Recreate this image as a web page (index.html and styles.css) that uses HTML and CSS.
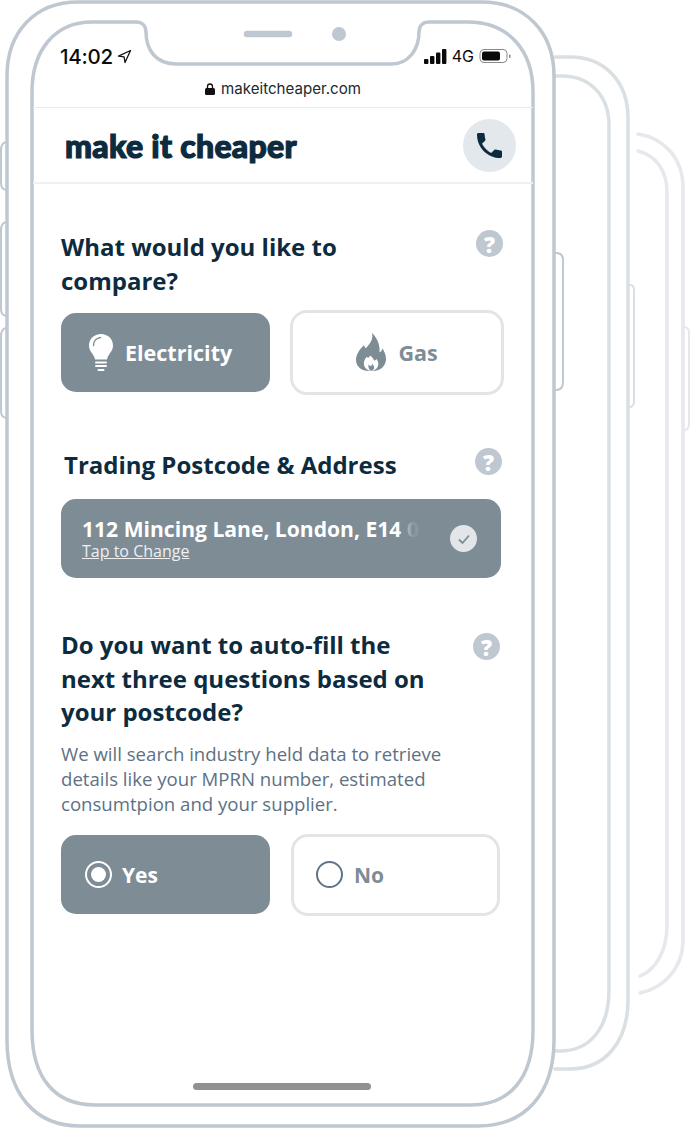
FILE: index.html
```html
<!DOCTYPE html>
<html lang="en">
<head>
<meta charset="utf-8">
<title>Make It Cheaper</title>
<link rel="stylesheet" href="styles.css">
</head>
<body>
<div class="device">
  <svg class="frame" width="690" height="1128" viewBox="0 0 690 1128" fill="none">
    <g class="back3">
      <path d="M638 134C664 138 683 158 683 188V940C683 968 664 988 640 993"/>
      <path d="M638 151C655 155 667 170 667 192V925C667 952 655 970 640 976"/>
      <path class="thin" d="M684 327C687 327 689 329 689 333V424C689 428 687 430 684 430"/>
    </g>
    <g class="back2">
      <path d="M555 57H570C605 57 628 82 628 118V1000C628 1042 605 1069 570 1069H555"/>
      <path d="M555 76H562C590 76 609 96 609 125V990C609 1028 590 1051 560 1051H555"/>
      <path class="thin" d="M630 285C633 285 634 287 634 290V401C634 405 632 407 630 407"/>
    </g>
    <g class="main">
      <path d="M78 2H482C525 2 554 32 554 76V1040C554 1094 525 1126 478 1126H80C35 1126 7 1094 7 1040V76C7 32 35 2 78 2Z"/>
      <path d="M32 92C32 50 55 22 92 22H136C142 22 146 26 146 32C146 50 156 64 176 64H392C408 64 419 50 419 32C419 26 423 22 429 22H468C508 22 533 50 533 92V1030C533 1078 510 1105 470 1105H95C55 1105 32 1078 32 1030Z"/>
      <path class="thin" d="M6 142C2 143 1 146 1 150V182C1 187 2 189 6 190"/>
      <path class="thin" d="M6 222C2 223 1 226 1 230V308C1 313 2 315 6 316"/>
      <path class="thin" d="M6 328C2 329 1 332 1 336V410C1 415 2 417 6 418"/>
      <path class="thin" d="M556 253C561 253 563 256 563 260V382C563 387 561 390 556 390"/>
      <path class="speaker" d="M247 34H289"/>
    </g>
    <circle class="camera" cx="339" cy="34" r="7"/>
  </svg>

  <div class="screen">
    <div class="status">
      <div class="status-left">
        <span class="time">14:02</span>
        <svg class="locate" width="15" height="15" viewBox="0 0 15 15"><path d="M13.500 1.500 1.500 7.200l5.600.6.9 5.700z"/></svg>
      </div>
      <div class="status-right">
        <svg width="23" height="15" viewBox="0 0 23 15"><rect x="0" y="10" width="4.400" height="5" rx="1"/><rect x="6" y="7" width="4.400" height="8" rx="1"/><rect x="12" y="3.500" width="4.400" height="11.500" rx="1"/><rect x="18" y="0" width="4.400" height="15" rx="1"/></svg>
        <span class="net">4G</span>
        <svg width="32" height="16" viewBox="0 0 32 16"><rect class="batt-box" x="1" y="1.500" width="27" height="13" rx="4"/><rect x="3" y="3.500" width="18" height="9" rx="2"/><rect class="batt-tip" x="30" y="6.500" width="1.500" height="3.500" rx=".7"/></svg>
      </div>
    </div>
    <div class="urlbar">
      <svg width="10" height="12" viewBox="0 0 10 12"><path class="shackle" d="M2.500 5.500V3.500a2.500 2.500 0 0 1 5 0v2"/><rect x="0" y="5" width="10" height="7" rx="1.500"/></svg>
      <span>makeitcheaper.com</span>
    </div>
    <header class="topbar">
      <div class="logo">make it cheaper</div>
      <div class="call">
        <svg width="25" height="25" viewBox="3 3 18 18"><path d="M6.620 10.790c1.440 2.830 3.760 5.140 6.590 6.590l2.200-2.200c.27-.27.67-.36 1.020-.24 1.120.37 2.330.57 3.570.57.55 0 1 .45 1 1V20c0 .55-.45 1-1 1-9.390 0-17-7.610-17-17 0-.55.45-1 1-1h3.500c.55 0 1 .45 1 1 0 1.250.2 2.450.57 3.570.11.35.03.74-.25 1.020l-2.200 2.200z"/></svg>
      </div>
    </header>

    <main class="form">
      <section class="q q-compare">
        <div class="q-head">
          <h2>What would you like to compare?</h2>
          <span class="help">?</span>
        </div>
        <div class="options">
          <div class="opt opt-on opt-elec">
            <svg width="26" height="38" viewBox="0 0 26 38"><path class="bulb" d="M13 0C6 0 1 5 1 11.500c0 4.500 2.500 7 4.200 9.500 1 1.600 1.500 3 1.800 4.500h12c.3-1.500.8-2.900 1.800-4.500 1.700-2.500 4.200-5 4.200-9.500C25 5 20 0 13 0Z"/><path class="bulb-glint" d="M5.500 11.500C5.500 7 8.500 4 12.500 3.500"/><path class="bulb-base" d="M8 28.500h10M8 32h10M10.500 36h5"/></svg>
            <span>Electricity</span>
          </div>
          <div class="opt opt-off opt-gas">
            <svg width="30" height="38" viewBox="0 0 30 38"><path class="flame" d="M16 0c1.500 6-1.500 10-5.500 14.500C9.500 15.500 8.800 15 8 12 3.500 16.500 0 21.500 0 27c0 6.500 5.500 11 13 11h4c7.500 0 13-5 13-12 0-4.500-2-8-3.500-10.500-.5 2-1.500 3.300-3 3.800C24.300 12 21 4.500 16 0Z"/><path class="flame-cut" d="M14 22.500c-.8 2.400-2.300 3-3.300 1.200C8.500 26.200 7.500 29 8 32c.4 2.500 2.500 5 6.500 6h1.500c4-1 6-3.500 6.300-6.500.2-2-.6-4-1.800-5.500-.5 1.200-1.500 1.800-2.500 1.300-.7-1.800-2-3.500-4-4.800Z"/><path class="flame" d="M15 38c-2-1.500-3.200-4-2.500-6.500.7 1 1.500 1.500 2.300 1.500.9-.3 1.400-1.200 1.200-2.500 1.500 1.500 2.500 3.500 2 5-.4 1.300-1.300 2-3 2.500Z"/></svg>
            <span>Gas</span>
          </div>
        </div>
      </section>

      <section class="q q-address">
        <div class="q-head q-head-inset">
          <h2>Trading Postcode &amp; Address</h2>
          <span class="help">?</span>
        </div>
        <div class="address">
          <div class="address-text">
            <div class="address-line">112 Mincing Lane, London, E14 0</div>
            <a class="address-link">Tap to Change</a>
          </div>
          <span class="tick">
            <svg width="14" height="12" viewBox="0 0 14 12"><path d="M2 6.500 5.500 10 12 2.500"/></svg>
          </span>
        </div>
      </section>

      <section class="q q-autofill">
        <div class="q-head">
          <h2>Do you want to auto-fill the next three questions based on your postcode?</h2>
          <span class="help">?</span>
        </div>
        <p class="hint">We will search industry held data to retrieve details like your MPRN number, estimated consumtpion and your supplier.</p>
        <div class="options options-radio">
          <div class="opt opt-on opt-yes">
            <span class="radio radio-on"></span>
            <span>Yes</span>
          </div>
          <div class="opt opt-off opt-no">
            <span class="radio"></span>
            <span>No</span>
          </div>
        </div>
      </section>
    </main>
    <div class="home-bar"></div>
  </div>
</div>
</body>
</html>
```
FILE: styles.css
```css
* { box-sizing: border-box; }
html, body { margin: 0; padding: 0; background: #fff; }
.device { position: relative; width: 690px; height: 1128px; overflow: hidden; }
.frame { position: absolute; left: 0; top: 0; }
.frame path { stroke-width: 3.500; stroke-linecap: round; }
.frame .thin { stroke-width: 2; }
.main path { stroke: #bfc7d0; }
.back2 path { stroke: #d9dfe2; }
.back3 path { stroke: #e6e8ed; }
.frame .speaker { stroke-width: 6.500; }
.camera { fill: #bfc7d0; }

.screen {
  position: relative;
  margin-left: 33px;
  width: 500px;
  padding-top: 42px;
  font-family: "Open Sans", sans-serif;
}

.status {
  display: flex;
  justify-content: space-between;
  align-items: center;
  height: 28px;
  padding: 0 22px 0 27px;
  font-family: Inter, sans-serif;
  color: #0a0a0a;
}
.status-left, .status-right { display: flex; align-items: center; }
.time { font-size: 20.500px; font-weight: 500; letter-spacing: -0.2px; }
.locate { margin-left: 4px; }
.locate path { fill: none; stroke: #111; stroke-width: 1.300; stroke-linejoin: round; }
.status-right svg { fill: #0a0a0a; }
.status-right { gap: 5px; }
.net { font-size: 16px; font-weight: 400; }
.batt-box { fill: none; stroke: #8a8a8a; stroke-width: 1; }
.batt-tip { fill: #8a8a8a; }

.urlbar {
  display: flex;
  justify-content: center;
  align-items: center;
  gap: 6px;
  height: 38px;
  padding-right: 0;
  font-family: Inter, sans-serif;
  font-size: 15.100px;
  color: #22282c;
  border-bottom: 1px solid #e8ebee;
}
.urlbar svg { fill: #111; }
.urlbar .shackle { fill: none; stroke: #111; stroke-width: 1.300; }

.topbar {
  display: flex;
  justify-content: space-between;
  align-items: center;
  height: 76px;
  padding: 0 17px 0 32px;
  border-bottom: 2px solid #eef0f2;
}
.logo {
  font-family: Lato, sans-serif;
  font-weight: 900;
  font-size: 32px;
  color: #0d2b3e;
  letter-spacing: 0.3px;
  -webkit-text-stroke: 1.200px #0d2b3e;
}
.call {
  display: flex;
  align-items: center;
  justify-content: center;
  width: 53px;
  height: 53px;
  border-radius: 50%;
  background: #e3e8ec;
}
.call svg { fill: #0d2b3e; }

.form { padding: 0 28px; }
.q-compare { padding-top: 46px; }
.q-address { padding-top: 53px; }
.q-autofill { padding-top: 50px; }

.q-head { display: flex; justify-content: space-between; align-items: flex-start; }
.q-head-inset { padding-left: 3px; }
h2 {
  margin: 0;
  font-size: 24px;
  line-height: 33.500px;
  font-weight: 700;
  color: #0d2b3e;
  max-width: 375px;
}
.help {
  display: flex;
  align-items: center;
  justify-content: center;
  flex: none;
  width: 27px;
  height: 27px;
  border-radius: 50%;
  background: #bfc7d1;
  color: #fff;
  font-size: 22px;
  font-weight: 800;
  line-height: 1;
}
.q-compare .help { margin-right: 2px; }
.q-address .help { margin-right: 3px; }
.q-autofill .help { margin-right: 5px; margin-top: 5px; }
.q-address .q-head { height: 33px; }

.options { display: flex; align-items: center; gap: 20px; margin-top: 13px; }
.opt {
  display: flex;
  align-items: center;
  font-size: 21.500px;
  font-weight: 700;
}
.opt-on { background: #7e8c96; color: #fff; border-radius: 15px; height: 79px; width: 209px; }
.opt-off { background: #fff; color: #7e8c96; border: 3px solid #e2e5e6; border-radius: 17px; height: 85px; width: 214px; }
.opt-elec { padding-left: 27px; gap: 11px; }
.opt-gas { justify-content: center; gap: 12px; padding-bottom: 1px; }
.bulb { fill: #fff; }
.bulb-glint { fill: none; stroke: #7e8c96; stroke-width: 1.500; stroke-linecap: round; }
.bulb-base { fill: none; stroke: #fff; stroke-width: 2; stroke-linecap: round; }
.flame { fill: #7e8c96; }
.flame-cut { fill: #fff; }

.address {
  display: flex;
  align-items: center;
  justify-content: space-between;
  width: 440px;
  height: 79px;
  margin-top: 18px;
  padding: 0 24px 0 21px;
  background: #7e8c96;
  border-radius: 15px;
  color: #fff;
}
.address-text { position: relative; width: 340px; padding-bottom: 3px; overflow: hidden; }
.address-text::after {
  content: "";
  position: absolute;
  top: 0;
  right: 0;
  width: 24px;
  height: 30px;
  background: linear-gradient(to right, rgba(126,140,150,0), rgba(126,140,150,.9) 60%);
}
.address-line { font-size: 21.100px; font-weight: 700; line-height: 28px; white-space: nowrap; }
.address-link { display: block; font-size: 16px; line-height: 16px; text-decoration: underline; color: #eef0f2; }
.tick {
  display: flex;
  align-items: center;
  justify-content: center;
  width: 27px;
  height: 27px;
  border-radius: 50%;
  background: #e3e6e8;
}
.tick path { fill: none; stroke: #7e8c96; stroke-width: 1.800; }

.hint {
  margin: 12px 0 0;
  max-width: 400px;
  font-size: 18.600px;
  line-height: 25px;
  color: #5d7184;
}
.options-radio { margin-top: 18px; gap: 21px; }
.opt-yes { padding-left: 24px; gap: 10px; font-size: 21px; }
.opt-no { padding-left: 22px; gap: 11px; width: 209px; height: 82px; font-size: 21px; }
.radio {
  width: 27px;
  height: 27px;
  flex: none;
  border-radius: 50%;
  border: 2.500px solid #5f7587;
  background: #fff;
}
.radio-on {
  border-color: #fff;
  background: #7e8c96;
  position: relative;
}
.radio-on::after {
  content: "";
  position: absolute;
  inset: 4px;
  border-radius: 50%;
  background: #fff;
}

.home-bar {
  position: absolute;
  top: 1083px;
  left: 160px;
  width: 178px;
  height: 7px;
  border-radius: 4px;
  background: #909193;
}
```
